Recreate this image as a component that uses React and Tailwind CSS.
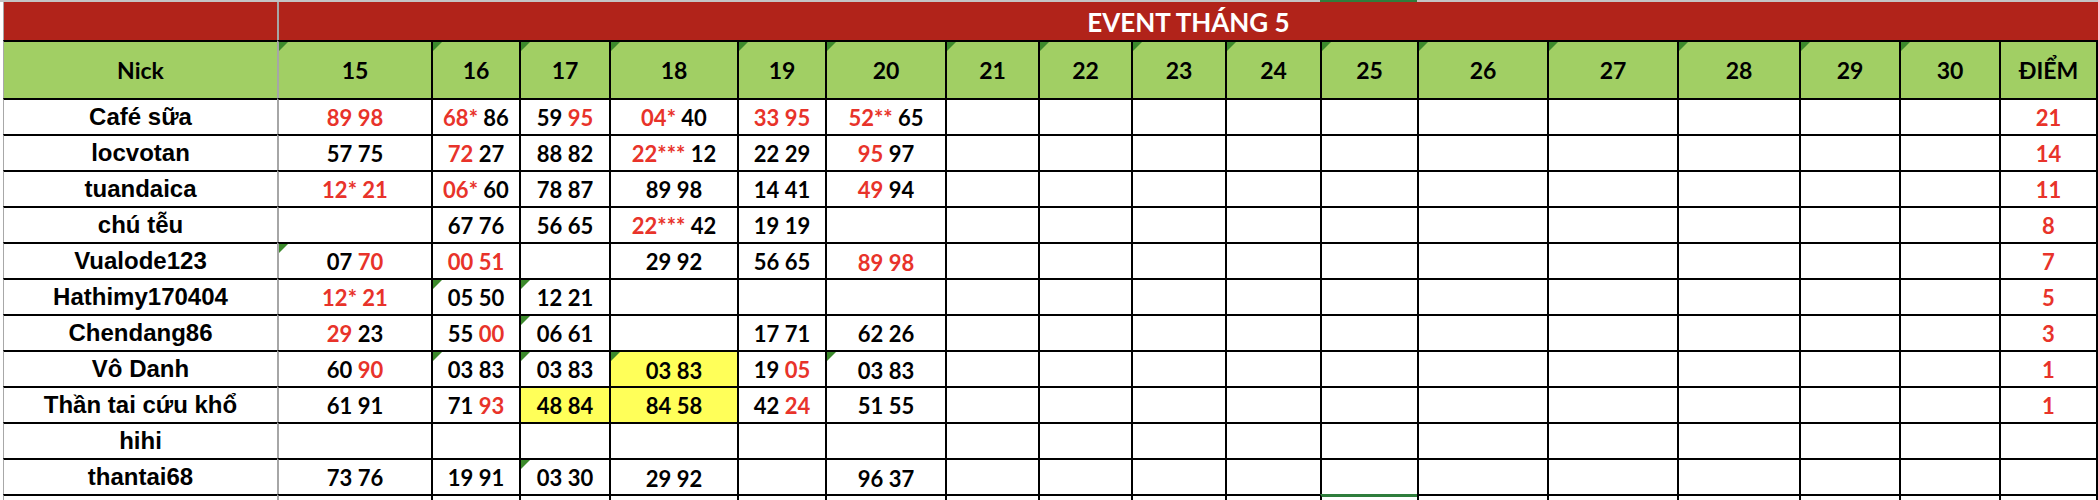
import React from "react";

const GRID =
  "grid grid-cols-[3px_274px_154px_88px_90px_128px_88px_120px_93px_93px_94px_95px_97px_130px_130px_122px_100px_100px_99px]";

const days = ["15", "16", "17", "18", "19", "20", "21", "22", "23", "24", "25", "26", "27", "28", "29", "30"];

// "!" in front of a number = red
const rows = [
  { nick: "Café sữa", pts: "21", c: ["!89 !98", "!68* 86", "59 !95", "!04* 40", "!33 !95", "!52** 65"] },
  { nick: "locvotan", pts: "14", c: ["57 75", "!72 27", "88 82", "!22*** 12", "22 29", "!95 97"] },
  { nick: "tuandaica", pts: "11", c: ["!12* !21", "!06* 60", "78 87", "89 98", "14 41", "!49 94"] },
  { nick: "chú tễu", pts: "8", c: ["", "67 76", "56 65", "!22*** 42", "19 19", ""] },
  { nick: "Vualode123", pts: "7", c: [{ v: "07 !70", t: 1 }, "!00 !51", "", "29 92", "56 65", { v: "!89 !98", low: 1 }] },
  { nick: "Hathimy170404", pts: "5", c: ["!12* !21", { v: "05 50", t: 1 }, { v: "12 21", t: 1 }, "", "", ""] },
  { nick: "Chendang86", pts: "3", c: ["!29 23", "55 !00", { v: "06 61", t: 1 }, "", "17 71", "62 26"] },
  {
    nick: "Vô Danh",
    pts: "1",
    c: ["60 !90", { v: "03 83", t: 1 }, { v: "03 83", t: 1 }, { v: "03 83", t: 1, y: 1, low: 1 }, "19 !05", { v: "03 83", t: 1, low: 1 }],
  },
  { nick: "Thần tai cứu khổ", pts: "1", c: ["61 91", "71 !93", { v: "48 84", y: 1 }, { v: "84 58", y: 1 }, "42 !24", "51 55"] },
  { nick: "hihi", pts: "", c: [] },
  { nick: "thantai68", pts: "", c: ["73 76", "19 91", { v: "03 30", t: 1 }, { v: "29 92", low: 1 }, "", { v: "96 37", low: 1 }] },
];

const Tri = () => (
  <span className="absolute left-0 top-0 w-0 h-0 border-t-[9px] border-r-[9px] border-t-[#3c8a2c] border-r-transparent" />
);

const Nums = ({ v }) => (
  <span className="whitespace-pre">
    {v.split(" ").map((tok, i) => {
      const red = tok.startsWith("!");
      return (
        <span key={i} className={red ? "text-[#e8332a]" : "text-black"}>
          {i > 0 ? " " : ""}
          {red ? tok.slice(1) : tok}
        </span>
      );
    })}
  </span>
);

const App = () => {
  return (
    <div className="w-[2098px] h-[500px] overflow-hidden bg-white font-['Lato',sans-serif] font-bold">
      {/* top edge */}
      <div className={GRID + " h-[2px]"}>
        {Array.from({ length: 19 }).map((_, i) => (
          <div key={i} className={i === 12 ? "bg-[#2f7d3c]" : "bg-[#c4c4c4]"} />
        ))}
      </div>

      {/* title band */}
      <div className={GRID + " h-[38px]"}>
        <div />
        <div className="border-l border-l-[#a8a8a8] bg-[#b1231a]" />
        <div className="col-span-17 border-l-2 border-l-[#a6a6a6] bg-[#b1231a] flex items-end justify-center pb-[5px]">
          <span className="text-white text-[26px] leading-none">EVENT THÁNG 5</span>
        </div>
      </div>

      {/* header */}
      <div className={GRID + " h-[58px]"}>
        <div />
        <div className="border-t-2 border-t-black border-l border-l-[#a8a8a8] bg-[#a1cf64] flex items-center justify-center text-[23px] text-black">
          Nick
        </div>
        {days.map((d, i) => (
          <div
            key={d}
            className={
              "relative border-t-2 border-t-black border-l-2 bg-[#a1cf64] flex items-center justify-center text-[23px] text-black " +
              (i === 0 ? "border-l-[#a6a6a6]" : "border-l-black")
            }
          >
            <Tri />
            {d}
          </div>
        ))}
        <div className="border-t-2 border-t-black border-l-2 border-l-black border-r-2 border-r-black bg-[#a1cf64] flex items-center justify-center text-[23px] text-black">
          ĐIỂM
        </div>
      </div>

      {/* data rows */}
      {rows.map((r) => (
        <div key={r.nick} className={GRID + " h-[36px]"}>
          <div />
          <div className="border-t-2 border-t-black border-l border-l-[#a8a8a8] flex items-center justify-center font-['Liberation_Sans',Arial,sans-serif] text-[24px] leading-none text-black">
            {r.nick}
          </div>
          {days.map((d, i) => {
            const raw = r.c[i] ?? "";
            const cell = typeof raw === "string" ? { v: raw } : raw;
            return (
              <div
                key={d}
                className={
                  "relative border-t-2 border-t-black border-l-2 flex justify-center text-[22px] leading-none " +
                  (i === 0 ? "border-l-[#a6a6a6] " : "border-l-black ") +
                  (cell.y ? "bg-[#ffff59] " : "bg-white ") +
                  (cell.low ? "items-end pb-[4px]" : "items-center pt-[2px]")
                }
              >
                {cell.t ? <Tri /> : null}
                {cell.v ? <Nums v={cell.v} /> : null}
              </div>
            );
          })}
          <div className="border-t-2 border-t-black border-l-2 border-l-black border-r-2 border-r-black flex items-center justify-center pt-[2px] text-[22px] leading-none text-[#e8332a]">
            {r.pts}
          </div>
        </div>
      ))}

      {/* cut-off row */}
      <div className={GRID + " h-[6px]"}>
        <div />
        <div className="border-t-2 border-t-black border-l border-l-[#a8a8a8]" />
        {days.map((d, i) => (
          <div
            key={d}
            className={
              "border-l-2 " +
              (i === 10 ? "border-t-[3px] border-t-[#2f7d3c] " : "border-t-2 border-t-black ") +
              (i === 0 ? "border-l-[#a6a6a6]" : "border-l-black")
            }
          />
        ))}
        <div className="border-t-2 border-t-black border-l-2 border-l-black border-r-2 border-r-black" />
      </div>
    </div>
  );
};

export default App;
